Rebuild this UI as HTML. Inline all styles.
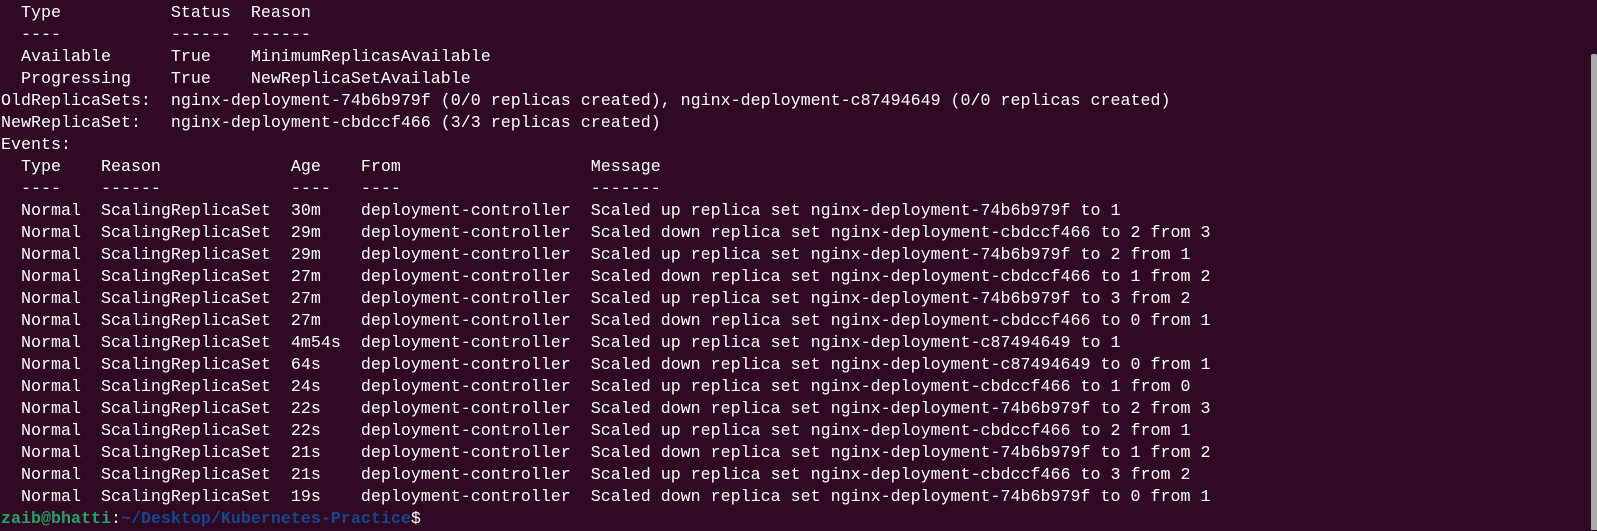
<!DOCTYPE html>
<html><head><meta charset="utf-8"><style>
html,body{margin:0;padding:0;background:#300a24;width:1597px;height:530px;overflow:hidden;}
pre{margin:0;position:absolute;left:1px;top:3px;font-family:"Liberation Mono",monospace;font-size:16.67px;line-height:22px;color:#ffffff;}
.g{color:#26a269;font-weight:bold}.b{color:#12488b;font-weight:bold}
.sb{position:absolute;left:1591px;top:54px;width:6px;height:476px;background:#aaaaaa;border-radius:2px 2px 0 0;}
</style></head><body>
<pre>  Type           Status  Reason
  ----           ------  ------
  Available      True    MinimumReplicasAvailable
  Progressing    True    NewReplicaSetAvailable
OldReplicaSets:  nginx-deployment-74b6b979f (0/0 replicas created), nginx-deployment-c87494649 (0/0 replicas created)
NewReplicaSet:   nginx-deployment-cbdccf466 (3/3 replicas created)
Events:
  Type    Reason             Age    From                   Message
  ----    ------             ----   ----                   -------
  Normal  ScalingReplicaSet  30m    deployment-controller  Scaled up replica set nginx-deployment-74b6b979f to 1
  Normal  ScalingReplicaSet  29m    deployment-controller  Scaled down replica set nginx-deployment-cbdccf466 to 2 from 3
  Normal  ScalingReplicaSet  29m    deployment-controller  Scaled up replica set nginx-deployment-74b6b979f to 2 from 1
  Normal  ScalingReplicaSet  27m    deployment-controller  Scaled down replica set nginx-deployment-cbdccf466 to 1 from 2
  Normal  ScalingReplicaSet  27m    deployment-controller  Scaled up replica set nginx-deployment-74b6b979f to 3 from 2
  Normal  ScalingReplicaSet  27m    deployment-controller  Scaled down replica set nginx-deployment-cbdccf466 to 0 from 1
  Normal  ScalingReplicaSet  4m54s  deployment-controller  Scaled up replica set nginx-deployment-c87494649 to 1
  Normal  ScalingReplicaSet  64s    deployment-controller  Scaled down replica set nginx-deployment-c87494649 to 0 from 1
  Normal  ScalingReplicaSet  24s    deployment-controller  Scaled up replica set nginx-deployment-cbdccf466 to 1 from 0
  Normal  ScalingReplicaSet  22s    deployment-controller  Scaled down replica set nginx-deployment-74b6b979f to 2 from 3
  Normal  ScalingReplicaSet  22s    deployment-controller  Scaled up replica set nginx-deployment-cbdccf466 to 2 from 1
  Normal  ScalingReplicaSet  21s    deployment-controller  Scaled down replica set nginx-deployment-74b6b979f to 1 from 2
  Normal  ScalingReplicaSet  21s    deployment-controller  Scaled up replica set nginx-deployment-cbdccf466 to 3 from 2
  Normal  ScalingReplicaSet  19s    deployment-controller  Scaled down replica set nginx-deployment-74b6b979f to 0 from 1
<span class="g">zaib@bhatti</span>:<span class="b">~/Desktop/Kubernetes-Practice</span>$</pre>
<div class="sb"></div>
</body></html>
